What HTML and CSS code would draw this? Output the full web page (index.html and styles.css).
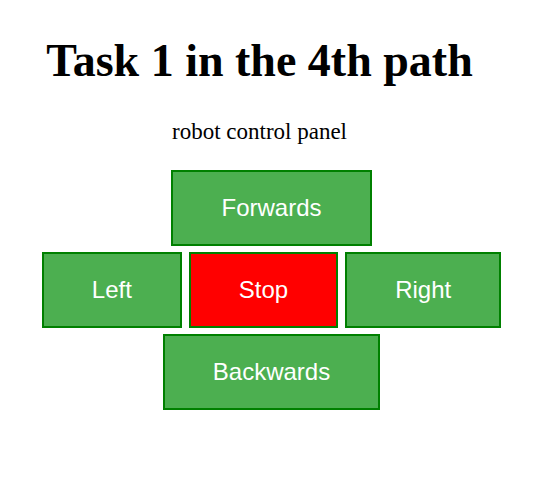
FILE: index.html
```html
<html>
    <head>
        <link rel="stylesheet" href="styles.css">
    </head>
    <body>
        <h1 class="title">Task 1 in the 4th path</h1>
        <p class="subtitle">robot control panel</p>
        <div class="panel">
            <div class="row">
                <button class="btn" id="forwards">Forwards</button>
            </div>
            <div class="row">
                <button class="btn" id="left">Left</button>
                <button class="btn btn-stop" id="stop">Stop</button>
                <button class="btn" id="right">Right</button>
            </div>
            <div class="row">
                <button class="btn" id="backwards">Backwards</button>
            </div>
        </div>
    </body>
</html>
```

FILE: styles.css
```css
body {
    font-family: "Liberation Serif", "Times New Roman", serif;
    text-align: center;
    margin: 0;
    padding: 8px;
}

.title {
    font-size: 46px;
    line-height: 53px;
    margin: 26px 28px 0 0;
}

.subtitle {
    font-size: 23px;
    line-height: 26px;
    margin: 32px 28px 25px 0;
}

.panel {
    display: flex;
    flex-direction: column;
    align-items: center;
    gap: 6px;
    margin-right: 4px;
}

.row {
    display: flex;
    gap: 7px;
}

.btn {
    font-family: "Liberation Sans", Arial, sans-serif;
    font-size: 24px;
    color: white;
    background-color: #4caf50;
    border: 2px solid green;
    padding: 22px 48px;
    line-height: 28px;
}

.btn-stop {
    background-color: red;
}
```
